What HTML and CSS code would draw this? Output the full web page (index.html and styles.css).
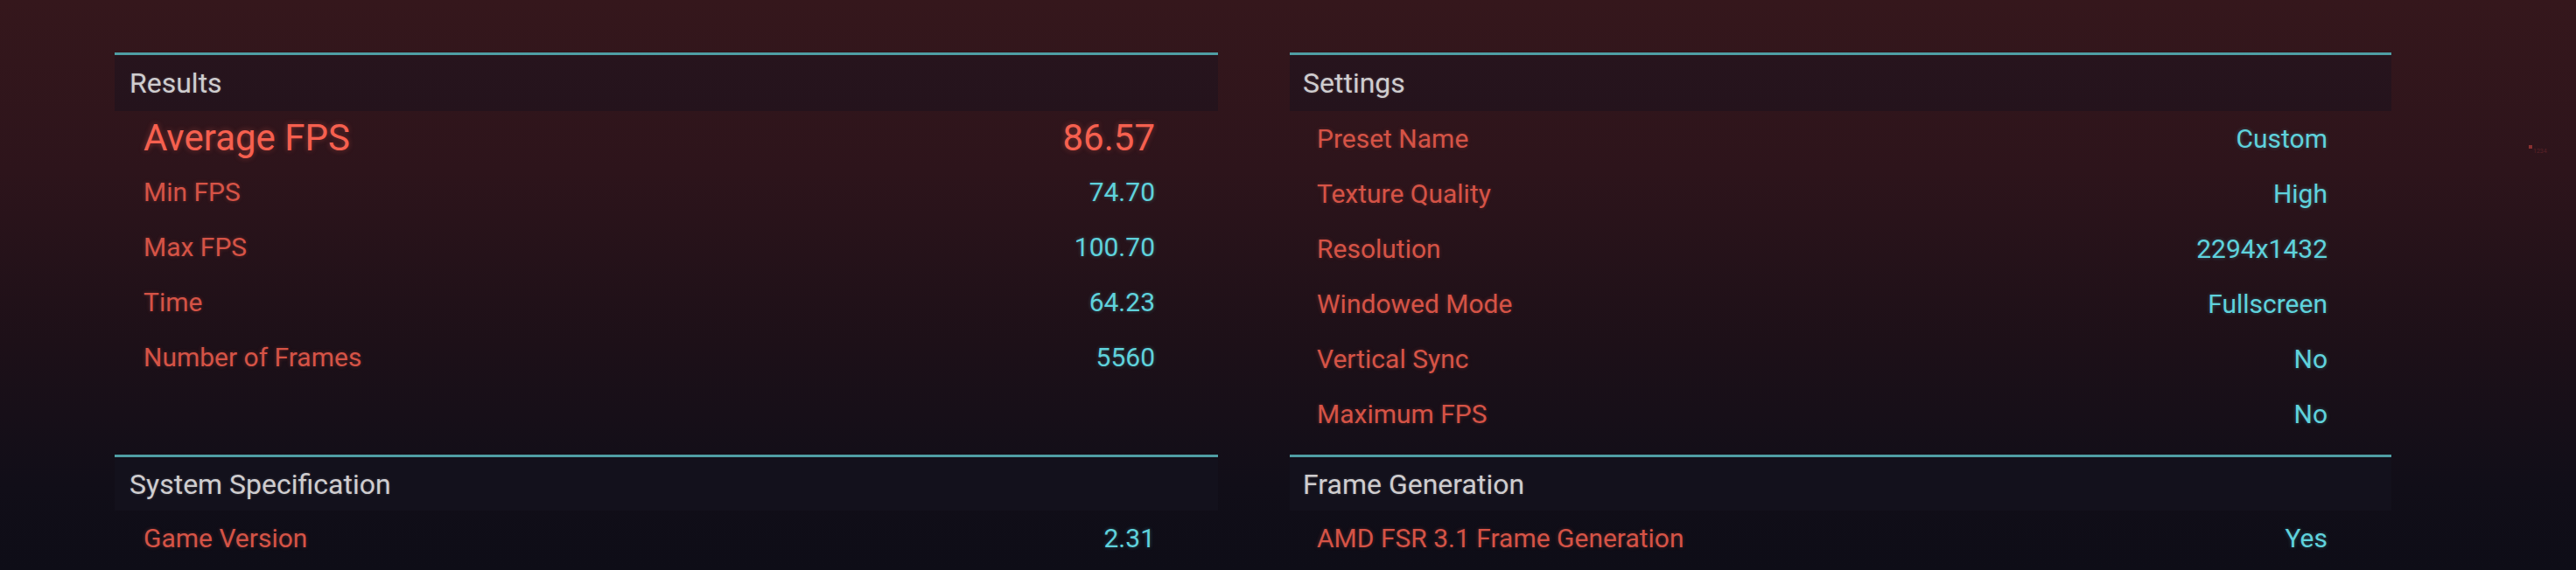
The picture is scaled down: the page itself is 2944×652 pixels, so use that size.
FILE: index.html
```html
<!DOCTYPE html>
<html lang="en">
<head>
<meta charset="utf-8">
<title>Benchmark Results</title>
<link rel="stylesheet" href="styles.css">
</head>
<body>
<div class="board">
  <div class="col col-left">
    <section class="section section-top">
      <div class="head">Results</div>
      <div class="row row-main"><span class="label">Average FPS</span><span class="value">86.57</span></div>
      <div class="row"><span class="label">Min FPS</span><span class="value">74.70</span></div>
      <div class="row"><span class="label">Max FPS</span><span class="value">100.70</span></div>
      <div class="row"><span class="label">Time</span><span class="value">64.23</span></div>
      <div class="row"><span class="label">Number of Frames</span><span class="value">5560</span></div>
    </section>
    <section class="section section-bottom">
      <div class="head">System Specification</div>
      <div class="row"><span class="label">Game Version</span><span class="value">2.31</span></div>
    </section>
  </div>
  <div class="col col-right">
    <section class="section section-top">
      <div class="head">Settings</div>
      <div class="row"><span class="label">Preset Name</span><span class="value">Custom</span></div>
      <div class="row"><span class="label">Texture Quality</span><span class="value">High</span></div>
      <div class="row"><span class="label">Resolution</span><span class="value">2294x1432</span></div>
      <div class="row"><span class="label">Windowed Mode</span><span class="value">Fullscreen</span></div>
      <div class="row"><span class="label">Vertical Sync</span><span class="value">No</span></div>
      <div class="row"><span class="label">Maximum FPS</span><span class="value">No</span></div>
    </section>
    <section class="section section-bottom">
      <div class="head">Frame Generation</div>
      <div class="row"><span class="label">AMD FSR 3.1 Frame Generation</span><span class="value">Yes</span></div>
    </section>
  </div>
</div>
<div class="mark"><span class="mark-dot"></span><span class="mark-text">1234</span></div>
</body>
</html>
```
FILE: styles.css
```css
html, body {
  margin: 0;
  padding: 0;
}
body {
  width: 2944px;
  height: 652px;
  overflow: hidden;
  position: relative;
  font-family: Roboto, "Liberation Sans", sans-serif;
  background: linear-gradient(180deg, #35171c 0%, #2d141b 30%, #1d1018 60%, #110e18 85%, #0e0d17 100%);
}
.board {
  display: grid;
  grid-template-columns: 1261px 1259px;
  column-gap: 82px;
  padding: 60px 0 0 131px;
}
.col {
  display: flex;
  flex-direction: column;
}
.section-top {
  height: 460px;
}
.head {
  border-top: 3px solid #4f9ea4;
  height: 64px;
  display: flex;
  align-items: center;
  padding-left: 17px;
  font-size: 32px;
  color: #cfcdcf;
  background: linear-gradient(180deg, #27141d 0%, #24131c 100%);
  text-shadow: 0 0 3px rgba(220, 220, 220, 0.25);
}
.section-bottom .head {
  height: 61px;
  background: #13111c;
}
.row {
  height: 63px;
  display: flex;
  align-items: center;
  justify-content: space-between;
  padding: 0 72px 0 33px;
  font-size: 30px;
}
.row-main {
  height: 61px;
  font-size: 42px;
}
.col-right .head {
  padding-left: 15px;
}
.col-right .row {
  padding: 0 73px 0 31px;
}
.label {
  color: #d55346;
  text-shadow: 0 0 4px rgba(213, 83, 70, 0.35);
}
.value {
  color: #5fd2dc;
  text-shadow: 0 0 4px rgba(95, 210, 220, 0.35);
}
.row-main .label,
.row-main .value {
  color: #f6604f;
  text-shadow: 0 0 6px rgba(246, 96, 79, 0.4);
}
.mark {
  position: absolute;
  left: 2890px;
  top: 166px;
  display: flex;
  align-items: flex-start;
  gap: 1px;
}
.mark-dot {
  width: 4px;
  height: 4px;
  background: #8a3030;
}
.mark-text {
  font-size: 7px;
  color: #5a2228;
  margin-top: 3px;
}
```
